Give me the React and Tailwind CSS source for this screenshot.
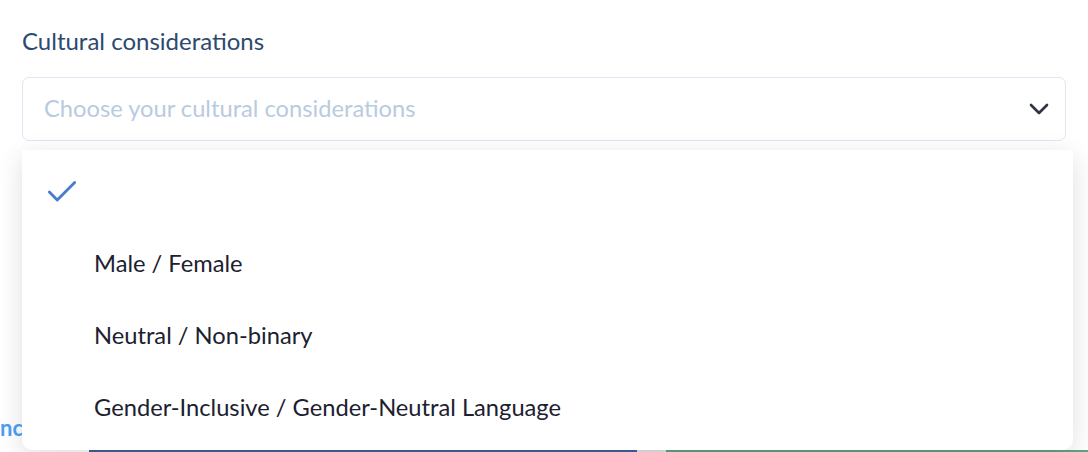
import React from "react";
import { ChevronDown, Check } from "lucide-react";

const options = [
  { label: "", selected: true },
  { label: "Male / Female" },
  { label: "Neutral / Non-binary" },
  { label: "Gender-Inclusive / Gender-Neutral Language" },
];

export default function App() {
  return (
    <div
      className="relative h-[452px] w-[1088px] overflow-hidden bg-white"
      style={{ fontFamily: "Lato, 'Open Sans', sans-serif" }}
    >
      <div className="px-[22px] pt-[24px]">
        <label className="block text-[24px] leading-[34px] text-[#2c4a6e]">Cultural considerations</label>
        <div className="mt-[19px] flex h-[64px] items-center justify-between rounded-[7px] border border-[#dce7f2] pl-[21px] pr-[10px]">
          <span className="text-[23.7px] text-[#b9cbde]">Choose your cultural considerations</span>
          <ChevronDown className="h-[32px] w-[32px] text-[#2f3542]" strokeWidth={2} />
        </div>

        {/* content underneath the open menu */}
        <div className="mt-[276px] flex items-end">
          <span className="-ml-[22px] text-[22px] font-bold leading-none text-[#4a9ff5]">nc</span>
        </div>
        <div className="absolute bottom-0 left-0 flex h-[2px] w-full">
          <div className="ml-[89px] w-[548px] bg-[#3d629c]" />
          <div className="w-[29px] bg-[#e3e3e3]" />
          <div className="flex-1 bg-[#5fa47f]" />
        </div>
      </div>

      <div className="absolute left-[22px] top-[150px] w-[1051px] rounded-b-[10px] bg-white py-[6px] shadow-[0_6px_26px_rgba(0,0,0,0.13)]">
        {options.map((o, i) => (
          <div key={i} className="relative flex h-[72px] items-center pl-[72px] text-[23.7px] text-[#1c2130]">
            {o.selected && (
              <Check className="absolute left-[21px] top-[17px] h-[38px] w-[38px] text-[#4a7cc9]" strokeWidth={1.8} />
            )}
            {o.label}
          </div>
        ))}
      </div>
    </div>
  );
}
